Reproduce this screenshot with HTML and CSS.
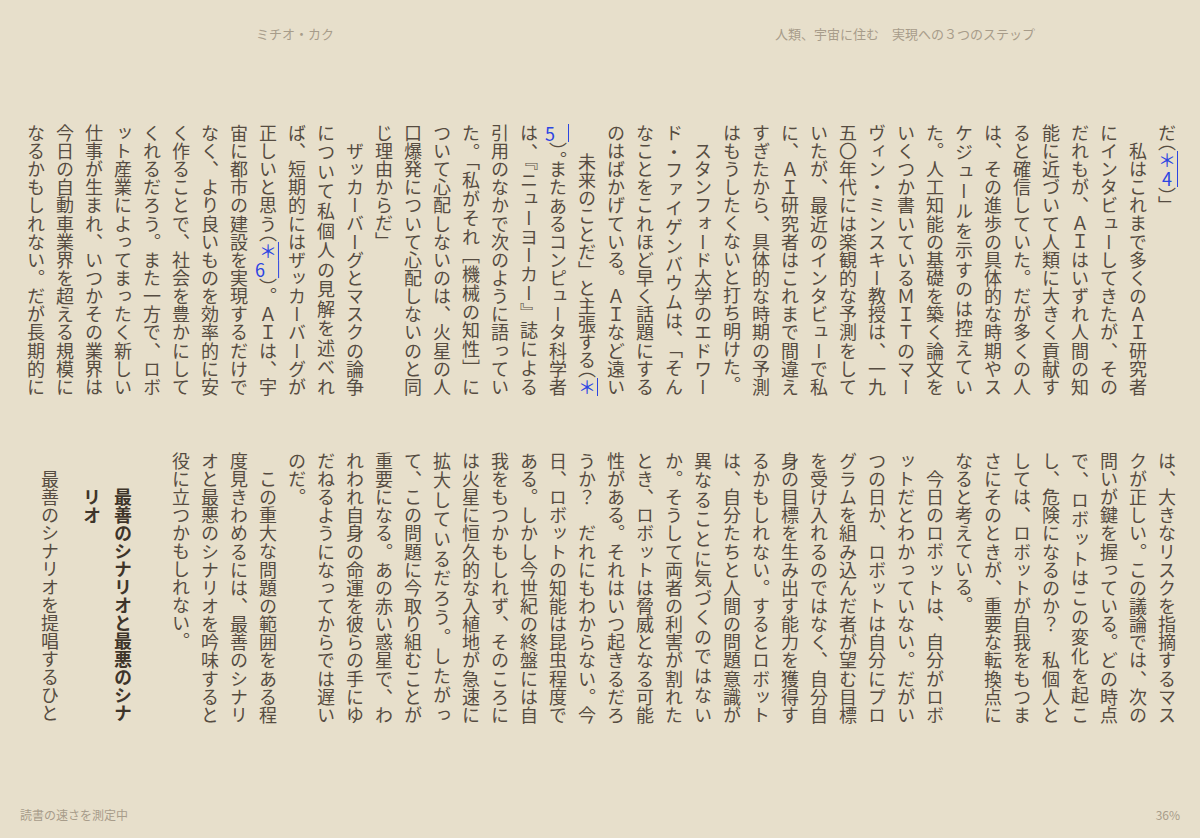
FILE: index.html
```html
<!DOCTYPE html>
<html lang="ja">
<head>
    <meta charset="UTF-8">
    <meta name="viewport" content="width=device-width, initial-scale=1.0">
    <title>人類、宇宙に住む</title>
    <link rel="stylesheet" href="styles.css">
</head>
<body>
    <div class="reader">
        <header class="running">
            <div>ミチオ・カク</div>
            <div>人類、宇宙に住む　実現への３つのステップ</div>
        </header>

        <main class="spread">
            <!-- upper half of the spread -->
            <section class="pane">
                <div class="ln end">だ<span class="ref">（<a class="note" href="#n4">＊<span class="tcy">4</span></a>）</span>」</div>
                <div class="ln ind">私はこれまで多くのＡＩ研究者</div>
                <div class="ln">にインタビューしてきたが、その</div>
                <div class="ln">だれもが、ＡＩはいずれ人間の知</div>
                <div class="ln">能に近づいて人類に大きく貢献す</div>
                <div class="ln">ると確信していた。だが多くの人</div>
                <div class="ln">は、その進歩の具体的な時期やス</div>
                <div class="ln">ケジュールを示すのは控えてい</div>
                <div class="ln">た。人工知能の基礎を築く論文を</div>
                <div class="ln">いくつか書いているＭＩＴのマー</div>
                <div class="ln">ヴィン・ミンスキー教授は、一九</div>
                <div class="ln">五〇年代には楽観的な予測をして</div>
                <div class="ln">いたが、最近のインタビューで私</div>
                <div class="ln">に、ＡＩ研究者はこれまで間違え</div>
                <div class="ln">すぎたから、具体的な時期の予測</div>
                <div class="ln end">はもうしたくないと打ち明けた。</div>
                <div class="ln ind">スタンフォード大学のエドワー</div>
                <div class="ln">ド・ファイゲンバウムは、「そん</div>
                <div class="ln">なことをこれほど早く話題にする</div>
                <div class="ln">のはばかげている。ＡＩなど遠い</div>
                <div class="ln flush">未来のことだ」と主張する<span class="ref">（<a class="note" href="#n5">＊</a></span></div>
                <div class="ln"><span class="ref"><a class="note" href="#n5"><span class="tcy">5</span></a>）。</span>またあるコンピュータ科学者</div>
                <div class="ln">は、『ニューヨーカー』誌による</div>
                <div class="ln">引用のなかで次のように語ってい</div>
                <div class="ln">た。「私がそれ［機械の知性］に</div>
                <div class="ln">ついて心配しないのは、火星の人</div>
                <div class="ln">口爆発について心配しないのと同</div>
                <div class="ln end">じ理由からだ」</div>
                <div class="ln ind">ザッカーバーグとマスクの論争</div>
                <div class="ln">について私個人の見解を述べれ</div>
                <div class="ln">ば、短期的にはザッカーバーグが</div>
                <div class="ln">正しいと思う<span class="ref">（<a class="note" href="#n6">＊<span class="tcy">6</span></a>）</span>。ＡＩは、宇</div>
                <div class="ln">宙に都市の建設を実現するだけで</div>
                <div class="ln">なく、より良いものを効率的に安</div>
                <div class="ln">く作ることで、社会を豊かにして</div>
                <div class="ln">くれるだろう。また一方で、ロボ</div>
                <div class="ln">ット産業によってまったく新しい</div>
                <div class="ln">仕事が生まれ、いつかその業界は</div>
                <div class="ln">今日の自動車業界を超える規模に</div>
                <div class="ln">なるかもしれない。だが長期的に</div>
            </section>

            <!-- lower half of the spread -->
            <section class="pane">
                <div class="ln">は、大きなリスクを指摘するマス</div>
                <div class="ln">クが正しい。この議論では、次の</div>
                <div class="ln">問いが鍵を握っている。どの時点</div>
                <div class="ln">で、ロボットはこの変化を起こ</div>
                <div class="ln">し、危険になるのか？　私個人と</div>
                <div class="ln">しては、ロボットが自我をもつま</div>
                <div class="ln">さにそのときが、重要な転換点に</div>
                <div class="ln end">なると考えている。</div>
                <div class="ln ind">今日のロボットは、自分がロボ</div>
                <div class="ln">ットだとわかっていない。だがい</div>
                <div class="ln">つの日か、ロボットは自分にプロ</div>
                <div class="ln">グラムを組み込んだ者が望む目標</div>
                <div class="ln">を受け入れるのではなく、自分自</div>
                <div class="ln">身の目標を生み出す能力を獲得す</div>
                <div class="ln">るかもしれない。するとロボット</div>
                <div class="ln">は、自分たちと人間の問題意識が</div>
                <div class="ln">異なることに気づくのではない</div>
                <div class="ln">か。そうして両者の利害が割れた</div>
                <div class="ln">とき、ロボットは脅威となる可能</div>
                <div class="ln">性がある。それはいつ起きるだろ</div>
                <div class="ln">うか？　だれにもわからない。今</div>
                <div class="ln">日、ロボットの知能は昆虫程度で</div>
                <div class="ln">ある。しかし今世紀の終盤には自</div>
                <div class="ln">我をもつかもしれず、そのころに</div>
                <div class="ln">は火星に恒久的な入植地が急速に</div>
                <div class="ln">拡大しているだろう。したがっ</div>
                <div class="ln">て、この問題に今取り組むことが</div>
                <div class="ln">重要になる。あの赤い惑星で、わ</div>
                <div class="ln">れわれ自身の命運を彼らの手にゆ</div>
                <div class="ln">だねるようになってからでは遅い</div>
                <div class="ln end">のだ。</div>
                <div class="ln ind">この重大な問題の範囲をある程</div>
                <div class="ln">度見きわめるには、最善のシナリ</div>
                <div class="ln">オと最悪のシナリオを吟味すると</div>
                <div class="ln end">役に立つかもしれない。</div>
                <h3 class="hd">最善のシナリオと最悪のシナリオ</h3>
                <div class="ln end ind">最善のシナリオを提唱するひと</div>
            </section>
        </main>

        <footer class="status">
            <span>読書の速さを測定中</span>
            <span>36%</span>
        </footer>
    </div>
</body>
</html>
```

FILE: styles.css
```css
html, body {
    margin: 0;
    padding: 0;
}
body {
    background-color: #e7dfcb;
    color: #564c41;
    font-family: "Noto Sans CJK JP", sans-serif;
    overflow: hidden;
}
.reader {
    height: 838px;
    display: flex;
    flex-direction: column;
}

/* running heads */
.running {
    display: grid;
    grid-template-columns: 1fr 1fr;
    column-gap: 20px;
    padding-top: 26px;
    font-size: 13px;
    line-height: 16px;
    color: #a79c8a;
    text-align: center;
}

/* the text, set vertically in two bands */
.spread {
    flex: 1;
    display: flex;
    flex-direction: column;
    gap: 56px;
    padding: 82px 19px 0 21px;
}
.pane {
    writing-mode: vertical-rl;
    height: 272px;
    font-size: 18px;
    line-height: 29px;
    text-autospace: no-autospace;
}
.ln {
    text-align: justify;
    text-align-last: justify;
}
.ln.end {
    text-align-last: auto;
}
.ln.flush {
    text-align-last: end;
}
.ln.ind {
    text-indent: 1em;
}
.hd {
    margin: 0;
    margin-block: 28px 12px;
    padding-inline-start: 2em;
    font-size: 18px;
    line-height: 31px;
    font-weight: bold;
    color: #3e3429;
}

/* footnote markers */
.ref {
    font-feature-settings: "vhal" 1;
}
.note {
    font-feature-settings: normal;
    color: #2c45e2;
    text-decoration: underline;
    text-decoration-thickness: 1px;
    text-underline-position: right;
}
.tcy {
    text-combine-upright: all;
}

/* status line */
.status {
    display: flex;
    justify-content: space-between;
    padding: 0 20px 15px;
    font-size: 12px;
    line-height: 16px;
    color: #a79c8a;
}
```
